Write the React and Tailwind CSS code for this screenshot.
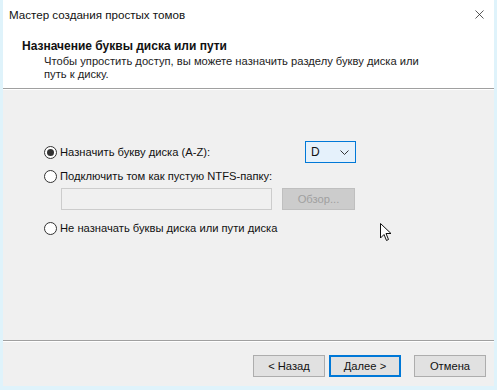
import { X } from 'lucide-react';

function Radio({ checked, label }) {
    return (
        <div className="flex items-center gap-[3px]">
            <span className="w-[13px] h-[13px] rounded-full border border-[#333] bg-white flex items-center justify-center">
                {checked && <span className="w-[7px] h-[7px] rounded-full bg-[#333]" />}
            </span>
            <span className="text-[11.2px] leading-[14px] text-[#111]">{label}</span>
        </div>
    );
}

function Button({ children, primary }) {
    return (
        <button
            type="button"
            className={
                primary
                    ? 'w-[72px] h-[22px] bg-[#e1e1e1] border-2 border-[#0078d7] text-[11.2px] text-[#111]'
                    : 'w-[72px] h-[22px] bg-[#e1e1e1] border border-[#adadad] text-[11.2px] text-[#111]'
            }
        >
            {children}
        </button>
    );
}

export default function App() {
    return (
        <div
            className="w-[497px] h-[390px] flex flex-col bg-[#f0f0f0] border-l-[3px] border-r-[3px] border-b-[4px] border-[#dff3fb] overflow-hidden"
            style={{ fontFamily: '"Liberation Sans", Arial, sans-serif' }}
        >
            {/* header */}
            <div className="bg-white h-[88px] flex flex-col">
                <div className="h-[29px] flex items-center justify-between pl-[6px] pr-[7px]">
                    <span className="text-[11.6px] text-[#111]">Мастер создания простых томов</span>
                    <X size={15} strokeWidth={1.2} className="text-[#222]" />
                </div>
                <div className="pl-[19px] mt-[10px] text-[12px] font-bold text-[#111] leading-[14px]">
                    Назначение буквы диска или пути
                </div>
                <div className="pl-[41px] mt-[2px] text-[11.2px] text-[#222] leading-[13px]">
                    Чтобы упростить доступ, вы можете назначить разделу букву диска или
                    <br />
                    путь к диску.
                </div>
            </div>
            <div className="h-px bg-[#a0a0a0]" />
            <div className="h-px bg-white" />

            {/* body */}
            <div className="flex-1 flex flex-col pl-[41px] pt-[51px] relative">
                <div className="flex items-center h-[22px]">
                    <div className="w-[261px]">
                        <Radio checked label="Назначить букву диска (A-Z):" />
                    </div>
                    <div className="w-[51px] h-[22px] bg-[#e5f1fb] border border-[#0078d7] flex items-center justify-between pl-[5px] pr-[6px]">
                        <span className="text-[12px] text-[#111]">D</span>
                        <svg width="9" height="5" viewBox="0 0 9 5">
                            <path d="M0.5 0.5 L4.5 4.5 L8.5 0.5" fill="none" stroke="#333" strokeWidth="1" />
                        </svg>
                    </div>
                </div>
                <div className="mt-[4px] h-[18px] flex items-center">
                    <Radio label="Подключить том как пустую NTFS-папку:" />
                </div>
                <div className="mt-[3px] pl-[17px] flex items-center gap-[10px]">
                    <div className="w-[211px] h-[22px] bg-[#f0f0f0] border border-[#cccccc]" />
                    <div className="w-[73px] h-[22px] bg-[#cccccc] border border-[#bfbfbf] flex items-center justify-center text-[11.2px] text-[#a0a0a0]">
                        Обзор...
                    </div>
                </div>
                <div className="mt-[9px] h-[18px] flex items-center">
                    <Radio label="Не назначать буквы диска или пути диска" />
                </div>

                {/* mouse cursor */}
                <svg className="absolute left-[377px] top-[133px]" width="12" height="19" viewBox="0 0 12 19">
                    <path d="M0.5 0.5 L0.5 15 L4 11.5 L6.5 17.5 L8.5 16.5 L6 10.5 L11 10.5 Z" fill="white" stroke="#111" strokeWidth="1" />
                </svg>
            </div>

            {/* footer */}
            <div className="h-px bg-[#a0a0a0]" />
            <div className="h-px bg-white" />
            <div className="h-[44px] flex items-start justify-end pt-[13px] pr-[8px]">
                <div className="flex">
                    <Button>&lt; Назад</Button>
                    <div className="w-[4px]" />
                    <Button primary>Далее &gt;</Button>
                    <div className="w-[13px]" />
                    <Button>Отмена</Button>
                </div>
            </div>
        </div>
    );
}
